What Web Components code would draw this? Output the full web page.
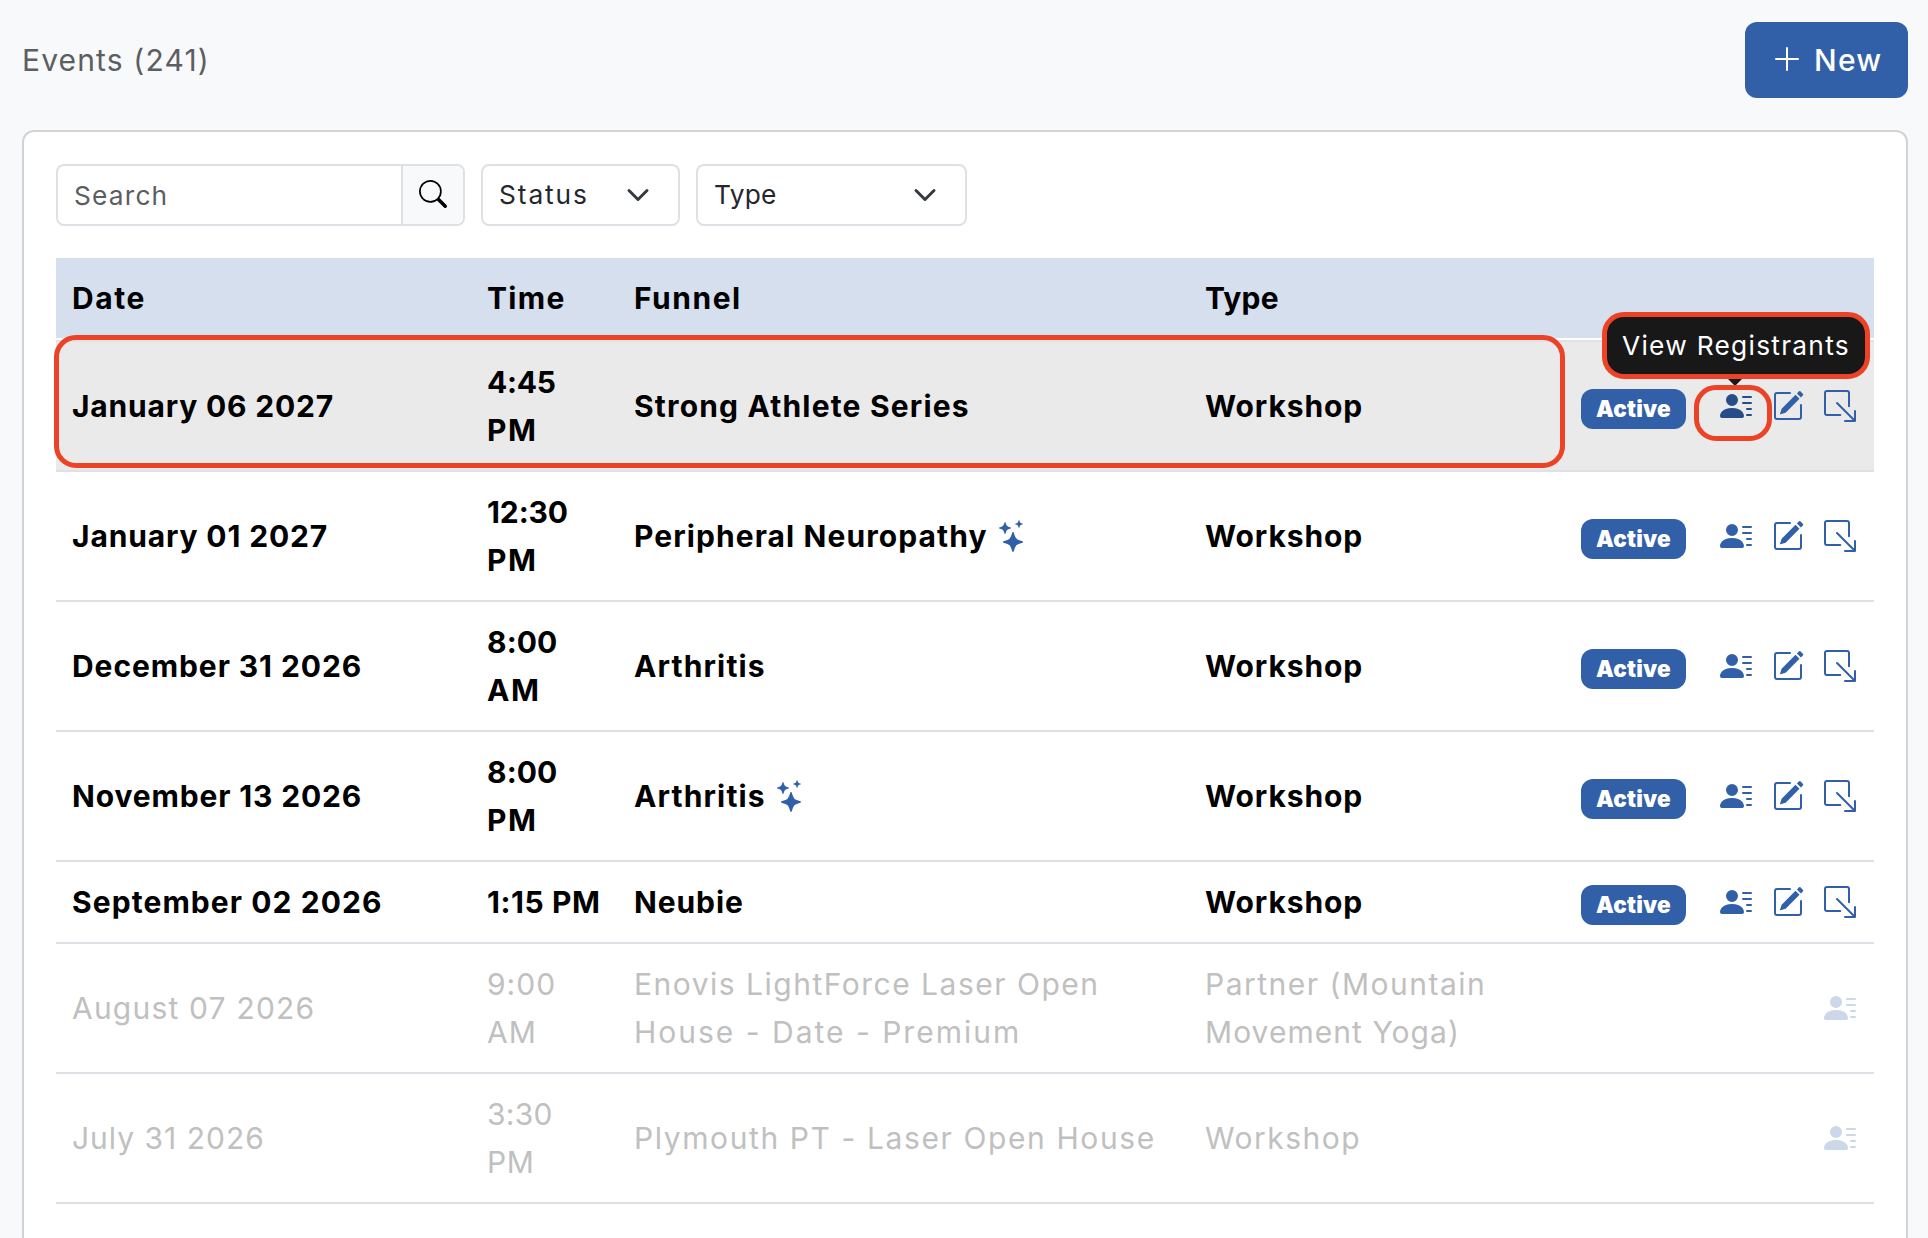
<!DOCTYPE html>
<html lang="en">
<head>
<meta charset="utf-8">
<title>Events</title>
<style>
    :root {
        --blue: #3160a9;
        --line: #dfe0e6;
        --ring: #ec4225;
    }
    html, body {
        margin: 0;
        height: 100%;
        overflow: hidden;
        background: #f8f9fb;
        font-family: Inter, "Noto Sans", sans-serif;
        font-size: 30px;
    }
</style>
</head>
<body>
<events-page></events-page>

<script>
const ICONS = {
    plus: '<path fill-rule="evenodd" d="M8 2a.5.5 0 0 1 .5.5v5h5a.5.5 0 0 1 0 1h-5v5a.5.5 0 0 1-1 0v-5h-5a.5.5 0 0 1 0-1h5v-5A.5.5 0 0 1 8 2"/>',
    search: '<path d="M11.742 10.344a6.5 6.5 0 1 0-1.397 1.398h-.001q.044.06.098.115l3.85 3.85a1 1 0 0 0 1.415-1.414l-3.85-3.85a1 1 0 0 0-.115-.1zM12 6.5a5.5 5.5 0 1 1-11 0 5.5 5.5 0 0 1 11 0"/>',
    chevron: '<path fill="none" stroke="currentColor" stroke-linecap="round" stroke-linejoin="round" stroke-width="2" d="m2 5 6 6 6-6"/>',
    people: '<path d="M6 8a3 3 0 1 0 0-6 3 3 0 0 0 0 6m-5 6s-1 0-1-1 1-4 6-4 6 3 6 4-1 1-1 1zM11 3.5a.5.5 0 0 1 .5-.5h4a.5.5 0 0 1 0 1h-4a.5.5 0 0 1-.5-.5m.5 2.5a.5.5 0 0 0 0 1h4a.5.5 0 0 0 0-1zm2 3a.5.5 0 0 0 0 1h2a.5.5 0 0 0 0-1zm0 3a.5.5 0 0 0 0 1h2a.5.5 0 0 0 0-1z"/>',
    edit: '<path d="M15.502 1.94a.5.5 0 0 1 0 .706L14.459 3.69l-2-2L13.502.646a.5.5 0 0 1 .707 0l1.293 1.293zm-1.75 2.456-2-2L4.939 9.21a.5.5 0 0 0-.121.196l-.805 2.414a.25.25 0 0 0 .316.316l2.414-.805a.5.5 0 0 0 .196-.12l6.813-6.814z"/><path fill-rule="evenodd" d="M1 13.5A1.5 1.5 0 0 0 2.5 15h11a1.5 1.5 0 0 0 1.5-1.5v-6a.5.5 0 0 0-1 0v6a.5.5 0 0 1-.5.5h-11a.5.5 0 0 1-.5-.5v-11a.5.5 0 0 1 .5-.5H9a.5.5 0 0 0 0-1H2.5A1.5 1.5 0 0 0 1 2.5z"/>',
    open: '<path fill-rule="evenodd" d="M8.636 12.5a.5.5 0 0 1-.5.5H1.5A1.5 1.5 0 0 1 0 11.5v-10A1.5 1.5 0 0 1 1.5 0h10A1.5 1.5 0 0 1 13 1.5v6.636a.5.5 0 0 1-1 0V1.5a.5.5 0 0 0-.5-.5h-10a.5.5 0 0 0-.5.5v10a.5.5 0 0 0 .5.5h6.636a.5.5 0 0 1 .5.5"/><path fill-rule="evenodd" d="M16 15.5a.5.5 0 0 1-.5.5h-5a.5.5 0 0 1 0-1h3.793L6.146 6.854a.5.5 0 1 1 .708-.708L15 14.293V10.5a.5.5 0 0 1 1 0z"/>',
    stars: '<path d="M7.657 6.247c.11-.33.576-.33.686 0l.645 1.937a2.89 2.89 0 0 0 1.829 1.828l1.936.645c.33.11.33.576 0 .686l-1.937.645a2.89 2.89 0 0 0-1.828 1.829l-.645 1.936a.361.361 0 0 1-.686 0l-.645-1.937a2.89 2.89 0 0 0-1.828-1.828l-1.937-.645a.361.361 0 0 1 0-.686l1.937-.645a2.89 2.89 0 0 0 1.828-1.828zM3.794 1.148a.217.217 0 0 1 .412 0l.387 1.162c.173.518.579.924 1.097 1.097l1.162.387a.217.217 0 0 1 0 .412l-1.162.387A1.73 1.73 0 0 0 4.593 5.69l-.387 1.162a.217.217 0 0 1-.412 0L3.407 5.69A1.73 1.73 0 0 0 2.31 4.593l-1.162-.387a.217.217 0 0 1 0-.412l1.162-.387A1.73 1.73 0 0 0 3.407 2.31zM10.863.099a.145.145 0 0 1 .274 0l.258.774c.115.346.386.617.732.732l.774.258a.145.145 0 0 1 0 .274l-.774.258a1.16 1.16 0 0 0-.732.732l-.258.774a.145.145 0 0 1-.274 0l-.258-.774a1.16 1.16 0 0 0-.732-.732L9.1 2.137a.145.145 0 0 1 0-.274l.774-.258c.346-.115.617-.386.732-.732z"/>'
};

class BiIcon extends HTMLElement {
    constructor() {
        super();
        this.attachShadow({ mode: 'open' });
    }

    connectedCallback() {
        const size = this.getAttribute('size') || 32;
        this.shadowRoot.innerHTML = `
        <style>
            :host { display: inline-flex; flex: none; }
            svg { display: block; fill: currentColor; overflow: visible; }
        </style>
        <svg width="${size}" height="${size}" viewBox="0 0 16 16">${ICONS[this.getAttribute('name')]}</svg>`;
    }
}

class NewButton extends HTMLElement {
    constructor() {
        super();
        this.attachShadow({ mode: 'open' });
        this.shadowRoot.innerHTML = `
        <style>
            :host {
                display: flex;
                align-items: center;
                gap: 11px;
                box-sizing: border-box;
                width: 163px;
                height: 76px;
                padding-left: 26px;
                border-radius: 12px;
                background: var(--blue);
                color: #fff;
                font-weight: 500;
                letter-spacing: 1.2px;
            }
            bi-icon { margin-top: -2px; }
        </style>
        <bi-icon name="plus"></bi-icon><span><slot></slot></span>`;
    }
}

class SearchBox extends HTMLElement {
    constructor() {
        super();
        this.attachShadow({ mode: 'open' });
        this.shadowRoot.innerHTML = `
        <style>
            :host {
                display: flex;
                box-sizing: border-box;
                width: 409px;
                height: 62px;
                border: 2px solid var(--line);
                border-radius: 8px;
                overflow: hidden;
                font-size: 26.3px;
                letter-spacing: 1.18px;
                color: #5a5d61;
            }
            .field { flex: 1; display: flex; align-items: center; padding-left: 16px; }
            .button {
                display: flex;
                align-items: center;
                justify-content: center;
                width: 60px;
                border-left: 2px solid var(--line);
                background: #f8f9fb;
                color: #000;
            }
            bi-icon { margin-top: -2px; }
        </style>
        <div class="field"><slot></slot></div>
        <div class="button"><bi-icon name="search" size="28"></bi-icon></div>`;
    }
}

class SelectBox extends HTMLElement {
    constructor() {
        super();
        this.attachShadow({ mode: 'open' });
        this.shadowRoot.innerHTML = `
        <style>
            :host {
                display: flex;
                align-items: center;
                justify-content: space-between;
                box-sizing: border-box;
                height: 62px;
                padding: 0 28px 2px 16px;
                border: 2px solid var(--line);
                border-radius: 8px;
                font-size: 26.3px;
                color: #24282d;
            }
            bi-icon { color: #343a40; margin-top: 2px; }
        </style>
        <slot></slot><bi-icon name="chevron" size="24"></bi-icon>`;
    }
}

class StatusBadge extends HTMLElement {
    constructor() {
        super();
        this.attachShadow({ mode: 'open' });
        this.shadowRoot.innerHTML = `
        <style>
            :host {
                display: flex;
                align-items: center;
                justify-content: center;
                width: 105px;
                height: 40px;
                border-radius: 12px;
                background: var(--blue);
                color: #fff;
                font-size: 22.5px;
                font-weight: 900;
                letter-spacing: .2px;
            }
        </style>
        <slot></slot>`;
    }
}

class HintTip extends HTMLElement {
    constructor() {
        super();
        this.attachShadow({ mode: 'open' });
        this.shadowRoot.innerHTML = `
        <style>
            :host {
                display: flex;
                align-items: center;
                justify-content: center;
                box-sizing: border-box;
                width: 268px;
                height: 67px;
                border: 5px solid var(--ring);
                border-radius: 22px;
                background: #181818;
                color: #fff;
                font-size: 26.3px;
                font-weight: 400;
                letter-spacing: 1.27px;
                white-space: nowrap;
            }
            .arrow {
                position: absolute;
                left: 121px;
                top: 62px;
                border: solid transparent;
                border-width: 7px 7px 0;
                border-top-color: #181818;
            }
        </style>
        <span><slot></slot></span><div class="arrow"></div>`;
    }
}

class EventRow extends HTMLElement {
    constructor() {
        super();
        this.attachShadow({ mode: 'open' });
    }

    set data(data) {
        this._data = data;
        this.render();
    }

    // a cell is a list of [text, letter spacing] lines
    cell(lines, extra = '') {
        return `<div class="cell"><div>${lines.map(([text, track]) => `<span style="letter-spacing:${track}px">${text}</span>`).join('<br>')}${extra}</div></div>`;
    }

    render() {
        const { date, time, funnel, type, stars, past, hover } = this._data;
        const people = '<bi-icon name="people"></bi-icon>';
        const hint = '<hint-tip>View Registrants</hint-tip><div class="ring icon-ring"></div>';
        const actions = past ? people : `
            <status-badge>Active</status-badge>
            <div class="people">${people}${hover ? hint : ''}</div>
            <bi-icon name="edit"></bi-icon>
            <bi-icon name="open"></bi-icon>`;

        this.shadowRoot.innerHTML = `
        <style>
            :host {
                display: grid;
                grid-template-columns: 415px 147px 571px 376px 1fr;
                position: relative;
                border-bottom: 2px solid var(--line);
                line-height: 48px;
                font-weight: ${past ? 400 : 700};
                color: ${past ? '#c0c0c0' : '#000'};
                ${hover ? 'background: #eaeaea; border-top: 2px solid #e1e2e6; z-index: 1;' : ''}
            }
            .cell { display: flex; align-items: center; padding: 16px 0 16px 16px; white-space: nowrap; }
            .stars { display: inline-flex; vertical-align: -5px; margin-left: 9px; height: 32px; color: var(--blue); }
            .actions {
                display: flex;
                align-items: center;
                justify-content: flex-end;
                gap: 20px;
                padding-right: 18px;
                color: ${past ? '#ccd7e9' : 'var(--blue)'};
            }
            status-badge { margin: 6px 14px 0 0; }
            .people { position: relative; display: flex; ${hover ? 'color: #264d87;' : ''} }
            hint-tip { position: absolute; left: -118px; top: -78px; }
            .ring { position: absolute; box-sizing: border-box; border: 5px solid var(--ring); border-radius: 22px; }
            .icon-ring { left: -26px; top: -5px; width: 78px; height: 56px; }
            .row-ring { left: -2px; top: -7px; width: 1511px; height: 133px; }
        </style>
        ${this.cell(date)}${this.cell(time)}
        ${this.cell(funnel, stars ? '<bi-icon class="stars" name="stars"></bi-icon>' : '')}
        ${this.cell(type)}
        <div class="actions">${actions}</div>
        ${hover ? '<div class="ring row-ring"></div>' : ''}`;
    }
}

class EventTable extends HTMLElement {
    constructor() {
        super();
        this.attachShadow({ mode: 'open' });
    }

    set data(data) {
        this._data = data;
        this.render();
    }

    render() {
        this.shadowRoot.innerHTML = `
        <style>
            :host { display: block; }
            .head {
                display: grid;
                grid-template-columns: 415px 147px 571px 1fr;
                height: 80px;
                margin-bottom: 2px;
                align-items: center;
                background: #d6dfee;
                color: #000;
                font-weight: 700;
            }
            .head span { padding-left: 16px; }
        </style>
        <div class="head">
            <span style="letter-spacing:1.6px">Date</span>
            <span style="letter-spacing:1.3px">Time</span>
            <span style="letter-spacing:1.5px">Funnel</span>
            <span style="letter-spacing:.2px">Type</span>
        </div>`;
        this._data.forEach(item => {
            const row = document.createElement('event-row');
            row.data = item;
            this.shadowRoot.appendChild(row);
        });
    }
}

const WORKSHOP = [['Workshop', .9]];
const EVENTS = [
    { date: [['January 06 2027', .81]], time: [['4:45', -.3], ['PM', 1.5]], funnel: [['Strong Athlete Series', 1.18]], type: WORKSHOP, hover: true },
    { date: [['January 01 2027', .85]], time: [['12:30', -.1], ['PM', 1.5]], funnel: [['Peripheral Neuropathy', 1.09]], type: WORKSHOP, stars: true },
    { date: [['December 31 2026', .92]], time: [['8:00', .1], ['AM', 1.5]], funnel: [['Arthritis', 1.15]], type: WORKSHOP },
    { date: [['November 13 2026', .86]], time: [['8:00', .1], ['PM', 1.5]], funnel: [['Arthritis', 1.15]], type: WORKSHOP, stars: true },
    { date: [['September 02 2026', 1.08]], time: [['1:15 PM', .55]], funnel: [['Neubie', .9]], type: WORKSHOP },
    { date: [['August 07 2026', 1.2]], time: [['9:00', 1], ['AM', 1]], funnel: [['Enovis LightForce Laser Open', 1.5], ['House - Date - Premium', 2]], type: [['Partner (Mountain', 1.5], ['Movement Yoga)', 1.05]], past: true },
    { date: [['July 31 2026', 1]], time: [['3:30', .3], ['PM', .5]], funnel: [['Plymouth PT - Laser Open House', 1.6]], type: [['Workshop', 1.5]], past: true }
];

class EventsPage extends HTMLElement {
    constructor() {
        super();
        this.attachShadow({ mode: 'open' });
        this.shadowRoot.innerHTML = `
        <style>
            :host {
                display: flex;
                flex-direction: column;
                gap: 32px;
                box-sizing: border-box;
                height: 100%;
                padding: 22px 20px 0 22px;
            }
            header {
                display: flex;
                flex: none;
                align-items: center;
                justify-content: space-between;
                color: #5c5e61;
                letter-spacing: 1.15px;
            }
            main {
                flex: 1;
                padding: 32px;
                border: 2px solid #d2d3d5;
                border-bottom: 0;
                border-radius: 12px 12px 0 0;
                background: #fff;
            }
            .filters { display: flex; gap: 16px; margin-bottom: 32px; }
            .status { width: 199px; letter-spacing: 1.9px; }
            .type { width: 271px; letter-spacing: .3px; }
        </style>
        <header>
            <span>Events (241)</span>
            <new-button>New</new-button>
        </header>
        <main>
            <div class="filters">
                <search-box>Search</search-box>
                <select-box class="status">Status</select-box>
                <select-box class="type">Type</select-box>
            </div>
            <event-table></event-table>
        </main>`;
    }

    connectedCallback() {
        this.shadowRoot.querySelector('event-table').data = EVENTS;
    }
}

customElements.define('bi-icon', BiIcon);
customElements.define('new-button', NewButton);
customElements.define('search-box', SearchBox);
customElements.define('select-box', SelectBox);
customElements.define('status-badge', StatusBadge);
customElements.define('hint-tip', HintTip);
customElements.define('event-row', EventRow);
customElements.define('event-table', EventTable);
customElements.define('events-page', EventsPage);
</script>
</body>
</html>
